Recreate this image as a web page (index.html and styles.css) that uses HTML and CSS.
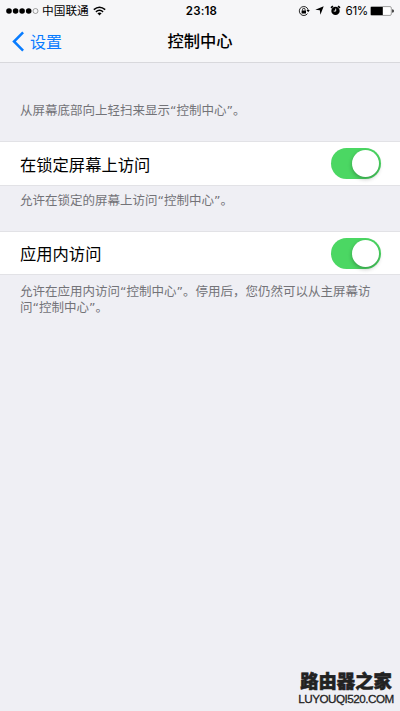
FILE: index.html
```html
<!DOCTYPE html>
<html lang="zh-CN">
<head>
<meta charset="utf-8">
<title>控制中心</title>
<link rel="stylesheet" href="styles.css">
</head>
<body>
<header class="header">
  <div class="status">
    <div class="status-left">
      <svg class="signal" width="34" height="8" viewBox="0 0 34 8"><circle cx="3" cy="4" r="2.8"/><circle cx="9.6" cy="4" r="2.8"/><circle cx="16.1" cy="4" r="2.8"/><circle cx="22.7" cy="4" r="2.8"/><circle class="empty" cx="29.5" cy="4" r="2.5"/></svg>
      <span class="carrier">中国联通</span>
      <svg class="wifi" width="13" height="10" viewBox="0 0 13 10"><path d="M.8 3.6Q6.5-1.2 12.2 3.6M2.9 5.8Q6.5 2.8 10.1 5.8"/><path class="solid" d="M4.4 7.3Q6.5 5.6 8.6 7.3L6.5 9.4Z"/></svg>
    </div>
    <span class="clock">23:18</span>
    <div class="status-right">
      <svg class="lock" width="12" height="12" viewBox="0 0 12 12"><path d="M9.5 8.6A4.5 4.5 0 1 1 10.2 5"/><path class="solid" d="M8.5 5.1h3.3L10.2 7.3ZM3.6 5.4h4.4v3H3.6Z"/><path d="M4.5 5.6V4.6a1.3 1.3 0 0 1 2.6 0v1"/></svg>
      <svg class="arrow" width="9" height="9" viewBox="0 0 9 9"><path d="M8.7.3 5.4 8.7 4.8 4.3.3 3.8Z"/></svg>
      <svg class="alarm" width="11" height="11" viewBox="0 0 11 11"><circle cx="5.5" cy="5.9" r="4.2"/><path class="bells" d="M1 2.8 2.9 1.2M10 2.8 8.1 1.2"/><path class="hands" d="M5.7 3.6V6.1H3.7"/></svg>
      <span class="percent">61%</span>
      <svg class="battery" width="24" height="10" viewBox="0 0 24 10"><rect class="case" x=".5" y=".6" width="20.8" height="8.8" rx="1.3"/><path d="M1 1.1h11.8v7.8H1ZM22.3 3.2q1.5.2 1.5 1.8t-1.5 1.8Z"/></svg>
    </div>
  </div>
  <nav class="nav">
    <div class="back"><svg width="13" height="21" viewBox="0 0 13 21"><path d="M11.1 1.3 2 10.5 11.1 19.7"/></svg><span>设置</span></div>
    <h1 class="title">控制中心</h1>
  </nav>
</header>
<main>
  <p class="note intro">从屏幕底部向上轻扫来显示“控制中心”。</p>
  <section class="row"><span>在锁定屏幕上访问</span><span class="toggle"><i class="knob"></i></span></section>
  <p class="note middle">允许在锁定的屏幕上访问“控制中心”。</p>
  <section class="row second"><span>应用内访问</span><span class="toggle"><i class="knob"></i></span></section>
  <p class="note last">允许在应用内访问“控制中心”。停用后，您仍然可以从主屏幕访<br>问“控制中心”。</p>
</main>
<footer class="mark"><div class="mark-name">路由器之家</div><div class="mark-url">LUYOUQI520.COM</div></footer>
</body>
</html>
```
FILE: styles.css
```css
* { box-sizing: border-box; }
body {
  margin: 0;
  width: 400px;
  height: 711px;
  overflow: hidden;
  display: flex;
  flex-direction: column;
  background: #efeff4;
  color: #000;
  font-family: Inter, "Noto Sans CJK SC", sans-serif;
}
svg { display: block; flex: none; }
main { flex: 1; }
.header { height: 63px; background: #f6f6f8; border-bottom: 1px solid #d8d8dc; }
.status {
  height: 20px;
  display: grid;
  grid-template-columns: 1fr auto 1fr;
  align-items: center;
  padding: 0 6px;
}
.status-left, .status-right { display: flex; align-items: center; }
.status-right { justify-content: flex-end; }
.empty { fill: none; stroke: #777; stroke-width: .7; }
.carrier { font-size: 11.7px; line-height: 20px; margin: 1px 0 0 2px; }
.wifi { margin-left: 4px; fill: none; stroke: #000; stroke-width: 1.5; }
.wifi .solid, .lock .solid { fill: #000; stroke: none; }
.clock { font-size: 11.5px; font-weight: 600; line-height: 20px; letter-spacing: .2px; margin: 1px -1.5px 0 1.5px; }
.lock { fill: none; stroke: #111; stroke-width: .9; margin-right: 5px; }
.arrow { margin-right: 6px; }
.bells { stroke: #000; stroke-width: 1.7; }
.hands { fill: none; stroke: #fff; stroke-width: .9; }
.percent { font-size: 11.7px; line-height: 20px; margin: 1px 2px 0 5px; letter-spacing: -.35px; }
.battery .case { fill: #fff; stroke: #777; stroke-width: .7; }
.nav {
  height: 42px;
  display: grid;
  grid-template-columns: 1fr auto 1fr;
  align-items: center;
  padding: 0 12px;
}
.back { display: flex; align-items: center; gap: 5px; color: #087cff; font-size: 16px; line-height: 24px; }
.back span { margin-top: 2px; }
.back path { fill: none; stroke: #087cff; stroke-width: 2.5; }
.title { margin: 0; font-size: 16.3px; line-height: 24px; font-weight: 500; }
.note {
  margin: 0;
  padding: 0 20px;
  color: #737378;
  font-family: "DejaVu Sans", "Noto Sans CJK SC", sans-serif;
  font-size: 12.5px;
  line-height: 15.5px;
  white-space: nowrap;
}
.intro { height: 78px; padding-top: 40px; }
.row {
  height: 45px;
  padding: 0 19px 0 20px;
  display: flex;
  align-items: center;
  justify-content: space-between;
  background: #fff;
  border-top: 1px solid #e2e2e6;
  border-bottom: 1px solid #e2e2e6;
  font-size: 16.3px;
}
.middle { height: 45px; padding-top: 7px; }
.second { height: 44px; }
.last { padding-top: 9px; }
.toggle {
  width: 50px;
  height: 31px;
  padding: 2px;
  display: flex;
  justify-content: flex-end;
  border-radius: 16px;
  background: #4bd763;
}
.knob { width: 27px; height: 27px; border-radius: 50%; background: #fff; box-shadow: 0 2px 4px rgba(0, 0, 0, .28); }
.mark { align-self: flex-end; width: 104px; margin: 0 2px 6px 0; text-align: center; color: #222; }
.mark-name { font-size: 18.3px; line-height: 21px; font-weight: 900; -webkit-text-stroke: .6px #222; white-space: nowrap; }
.mark-url { font-family: "Liberation Sans", Arial, sans-serif; font-size: 11.7px; line-height: 13px; letter-spacing: -.5px; -webkit-text-stroke: .3px #222; }
```
